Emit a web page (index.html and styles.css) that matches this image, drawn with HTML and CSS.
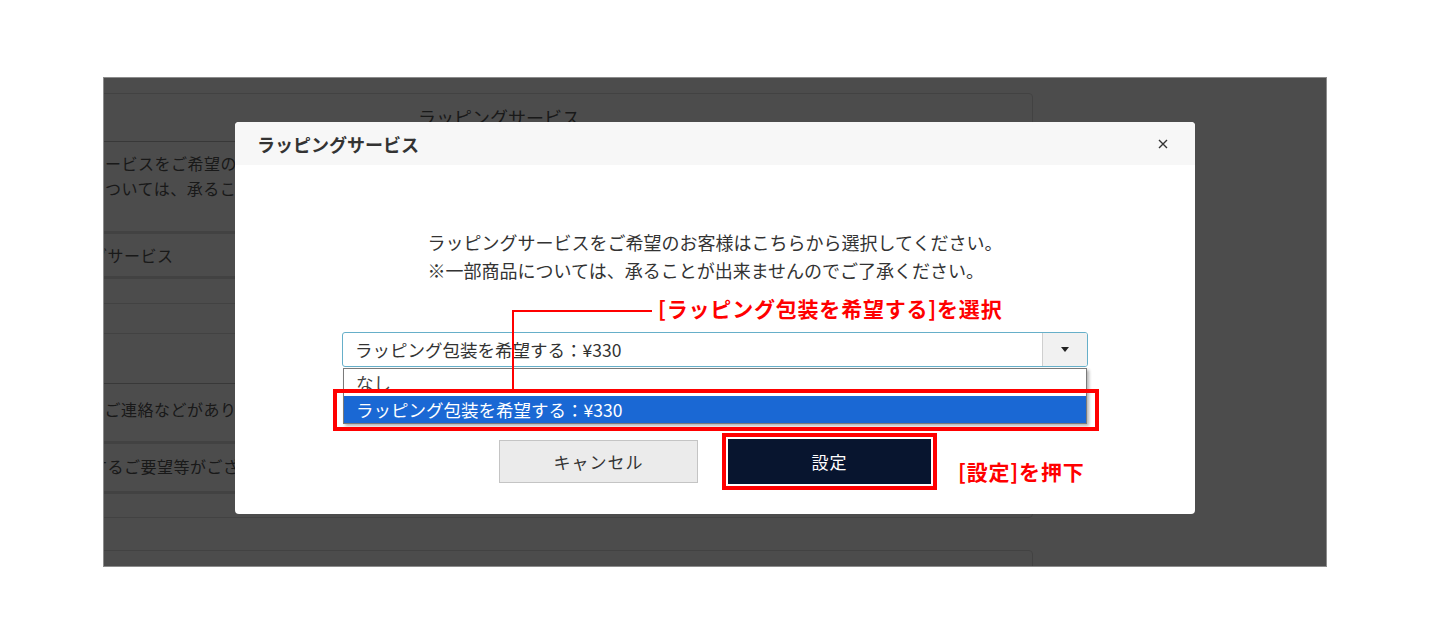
FILE: index.html
```html
<!DOCTYPE html>
<html lang="ja">
<head>
    <meta charset="UTF-8">
    <meta name="viewport" content="width=device-width, initial-scale=1.0">
    <title>ラッピングサービス</title>
    <link rel="stylesheet" href="styles.css">
</head>
<body>
    <div class="screen">
        <!-- the order page behind the dialog -->
        <div class="page">
            <div class="panel">
                <div class="panel-title">ラッピングサービス</div>
                <div class="row row-intro thick">
                    <p>ラッピングサービスをご希望のお客様はこちらから選択してください。</p>
                    <p>※一部商品については、承ることが出来ませんのでご了承ください。</p>
                </div>
                <div class="row row-label thick">ラッピングサービス</div>
                <div class="row row-gap1"></div>
                <div class="row row-gap2"></div>
                <div class="row row-gap3 dark"></div>
                <div class="row row-contact thick">配送についてご連絡などがありましたらご記入ください。</div>
                <div class="row row-request thick">包装に関するご要望等がございましたらご記入ください。</div>
                <div class="row row-end"></div>
            </div>
            <div class="panel panel-next"></div>
        </div>

        <div class="overlay"></div>

        <div class="modal">
            <div class="modal-header">
                <span class="modal-title">ラッピングサービス</span>
                <svg class="close-icon" width="10" height="10" viewBox="0 0 10 10">
                    <path d="M1 1L9 9M9 1L1 9" stroke="#333" stroke-width="1.4" fill="none"/>
                </svg>
            </div>
            <div class="modal-body">
                <div class="lead">
                    <p>ラッピングサービスをご希望のお客様はこちらから選択してください。</p>
                    <p>※一部商品については、承ることが出来ませんのでご了承ください。</p>
                </div>
                <div class="select-wrap">
                    <div class="select">
                        <span class="select-value">ラッピング包装を希望する：¥330</span>
                        <span class="select-arrow"><i class="caret"></i></span>
                    </div>
                    <ul class="options">
                        <li>なし</li>
                        <li class="active">ラッピング包装を希望する：¥330</li>
                    </ul>
                </div>
                <div class="buttons">
                    <button class="btn btn-cancel">キャンセル</button>
                    <button class="btn btn-set">設定</button>
                </div>
            </div>

            <!-- red annotations -->
            <div class="note note-select">[ラッピング包装を希望する]を選択</div>
            <div class="leader"></div>
            <div class="mark-option"></div>
            <div class="note note-set">[設定]を押下</div>
        </div>
    </div>
</body>
</html>
```

FILE: styles.css
```css
body {
    margin: 0;
    background-color: #fff;
    font-family: "Noto Sans CJK JP", "Noto Sans", sans-serif;
    color: #333;
}

p {
    margin: 0;
}

.screen {
    position: relative;
    box-sizing: border-box;
    width: 1224px;
    height: 490px;
    margin: 77px 0 0 103px;
    border: 1px solid #8c8c8c;
    overflow: hidden;
}

/* page behind */
.page {
    margin-left: -119px;
    padding-top: 15px;
}

.panel {
    box-sizing: border-box;
    width: 1048px;
    border: 1px solid #ddd;
    border-radius: 4px;
    background-color: #fff;
    color: #555;
    font-size: 16px;
    letter-spacing: 0.5px;
}

.panel-title {
    height: 47px;
    line-height: 47px;
    text-align: center;
    font-size: 18px;
    letter-spacing: 0;
    padding-right: 20px;
    border-bottom: 1px solid #bbb;
}

.row {
    box-sizing: border-box;
    padding-left: 20px;
    line-height: 25px;
    border-bottom: 1px solid #ddd;
    white-space: nowrap;
}

.row.thick {
    border-bottom: 3px solid #ddd;
}

.row.dark {
    border-bottom-color: #bbb;
}

.row-intro {
    height: 92px;
    padding-top: 9px;
}

.row-label {
    height: 45px;
    padding: 9px 0 0 39px;
}

.row-gap1 { height: 25px; }
.row-gap2 { height: 30px; }
.row-gap3 { height: 50px; }

.row-contact {
    height: 60px;
    padding-top: 13px;
}

.row-request {
    height: 50px;
    padding: 10px 0 0 39px;
}

.row-end {
    height: 23px;
    border-bottom: none;
}

.panel-next {
    height: 100px;
    margin-top: 32px;
}

.overlay {
    position: absolute;
    top: 0;
    left: 0;
    right: 0;
    bottom: 0;
    background-color: rgba(0, 0, 0, 0.7);
}

/* dialog */
.modal {
    position: absolute;
    left: 131px;
    top: 44px;
    width: 960px;
    background-color: #fff;
    border-radius: 4px;
}

.modal-header {
    height: 43px;
    display: flex;
    align-items: center;
    justify-content: space-between;
    padding: 0 27px 0 22px;
    background-color: #f7f7f7;
    border-radius: 4px 4px 0 0;
}

.modal-title {
    font-size: 18px;
    font-weight: bold;
    color: #333;
}

.modal-body {
    padding: 63px 107px 30px;
    text-align: center;
}

.lead {
    display: inline-block;
    text-align: left;
}

.lead p {
    font-size: 18px;
    line-height: 28px;
}

.select-wrap {
    position: relative;
    margin-top: 48px;
    text-align: left;
}

.select {
    box-sizing: border-box;
    height: 35px;
    display: flex;
    border: 1px solid #66afc9;
    border-radius: 3px;
}

.select-value {
    flex: 1;
    padding-left: 12px;
    line-height: 33px;
    font-size: 17.5px;
}

.select-arrow {
    width: 44px;
    display: flex;
    align-items: center;
    justify-content: center;
    background-color: #f1f1f1;
    border-left: 1px solid #cfcfcf;
    border-radius: 0 2px 2px 0;
}

.caret {
    width: 0;
    height: 0;
    border-top: 5px solid #222;
    border-left: 4px solid transparent;
    border-right: 4px solid transparent;
}

.options {
    position: absolute;
    top: 36px;
    left: 1px;
    right: 1px;
    margin: 0;
    padding: 0;
    list-style: none;
    background-color: #fff;
    border: 1px solid #7a7a7a;
    box-shadow: 2px 2px 3px rgba(0, 0, 0, 0.3);
}

.options li {
    height: 27px;
    line-height: 27px;
    padding-left: 12px;
    font-size: 17.5px;
    color: #444;
}

.options li.active {
    background-color: #1a68d4;
    color: #fff;
}

.buttons {
    display: flex;
    justify-content: center;
    align-items: center;
    gap: 30px;
    margin-top: 72px;
}

.btn {
    font-family: inherit;
    font-size: 17px;
    letter-spacing: 1px;
    cursor: pointer;
}

.btn-cancel {
    width: 199px;
    height: 43px;
    background-color: #ebebeb;
    border: 1px solid #c4c4c4;
    color: #333;
}

.btn-set {
    width: 203px;
    height: 45px;
    background-color: #08152f;
    border: none;
    color: #fff;
    outline: 4px solid #f00;
    outline-offset: 2px;
}

/* annotations */
.note {
    position: absolute;
    color: #f00;
    font-weight: bold;
    font-size: 21px;
    line-height: 24px;
    letter-spacing: 0.8px;
    white-space: nowrap;
}

.note-select {
    left: 423px;
    top: 174px;
}

.note-set {
    left: 723px;
    top: 337px;
}

.leader {
    position: absolute;
    left: 277px;
    top: 188px;
    width: 138px;
    height: 79px;
    border-top: 2px solid #f00;
    border-left: 2px solid #f00;
}

.mark-option {
    position: absolute;
    box-sizing: border-box;
    left: 98px;
    top: 267px;
    width: 766px;
    height: 42px;
    border: 4px solid #f00;
}
```
